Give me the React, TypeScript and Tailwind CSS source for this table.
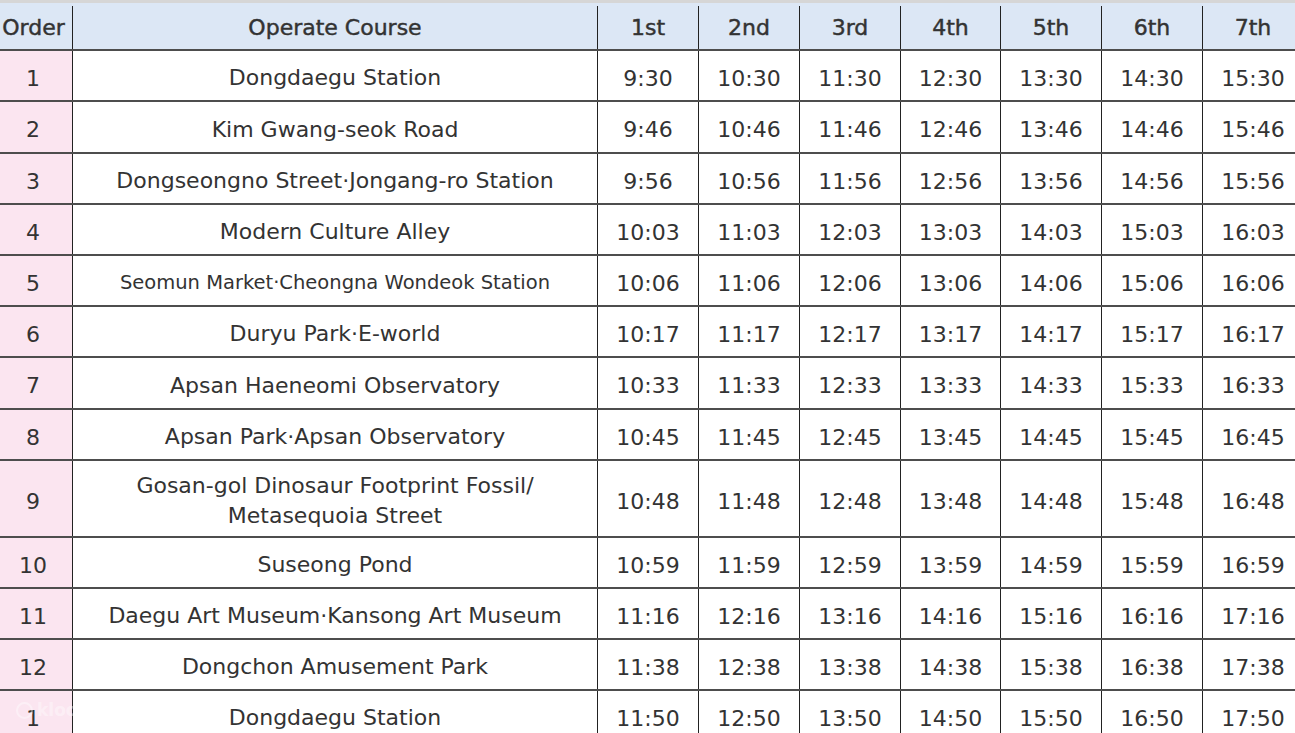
import React from "react";

const rows: { order: string; name: React.ReactNode; times: string[]; h: string; small?: boolean }[] = [
  { order: "1", name: "Dongdaegu Station", times: ["9:30", "10:30", "11:30", "12:30", "13:30", "14:30", "15:30"], h: "h-[51px]" },
  { order: "2", name: "Kim Gwang-seok Road", times: ["9:46", "10:46", "11:46", "12:46", "13:46", "14:46", "15:46"], h: "h-[52px]" },
  { order: "3", name: "Dongseongno Street·Jongang-ro Station", times: ["9:56", "10:56", "11:56", "12:56", "13:56", "14:56", "15:56"], h: "h-[51px]" },
  { order: "4", name: "Modern Culture Alley", times: ["10:03", "11:03", "12:03", "13:03", "14:03", "15:03", "16:03"], h: "h-[51px]" },
  { order: "5", name: "Seomun Market·Cheongna Wondeok Station", times: ["10:06", "11:06", "12:06", "13:06", "14:06", "15:06", "16:06"], h: "h-[51px]", small: true },
  { order: "6", name: "Duryu Park·E-world", times: ["10:17", "11:17", "12:17", "13:17", "14:17", "15:17", "16:17"], h: "h-[51px]" },
  { order: "7", name: "Apsan Haeneomi Observatory", times: ["10:33", "11:33", "12:33", "13:33", "14:33", "15:33", "16:33"], h: "h-[52px]" },
  { order: "8", name: "Apsan Park·Apsan Observatory", times: ["10:45", "11:45", "12:45", "13:45", "14:45", "15:45", "16:45"], h: "h-[51px]" },
  {
    order: "9",
    name: (
      <>
        Gosan-gol Dinosaur Footprint Fossil/
        <br />
        Metasequoia Street
      </>
    ),
    times: ["10:48", "11:48", "12:48", "13:48", "14:48", "15:48", "16:48"],
    h: "h-[77px]",
  },
  { order: "10", name: "Suseong Pond", times: ["10:59", "11:59", "12:59", "13:59", "14:59", "15:59", "16:59"], h: "h-[51px]" },
  { order: "11", name: "Daegu Art Museum·Kansong Art Museum", times: ["11:16", "12:16", "13:16", "14:16", "15:16", "16:16", "17:16"], h: "h-[51px]" },
  { order: "12", name: "Dongchon Amusement Park", times: ["11:38", "12:38", "13:38", "14:38", "15:38", "16:38", "17:38"], h: "h-[51px]" },
  { order: "1", name: "Dongdaegu Station", times: ["11:50", "12:50", "13:50", "14:50", "15:50", "16:50", "17:50"], h: "h-[51px]" },
];

const timeWidths = ["w-[101px]", "w-[101px]", "w-[101px]", "w-[100px]", "w-[101px]", "w-[101px]", "w-[101px]"];
const headers = ["1st", "2nd", "3rd", "4th", "5th", "6th", "7th"];

export default function App() {
  return (
    <div
      className="relative w-[1295px] h-[733px] overflow-hidden bg-white text-[#333]"
      style={{ fontFamily: '"DejaVu Sans", Verdana, sans-serif' }}
    >
      <div className="h-[3px] bg-[#d6d6d6]" />
      <div className="w-[1310px] flex flex-col">
        {/* header */}
        <div className="flex h-[48px] shrink-0 border-b-2 border-[#4d4d4d] bg-[#dce7f5] text-[22px] pt-[3px] [-webkit-text-stroke:0.45px_#333]">
          <div className="w-[73px] shrink-0 border-r border-[#222] flex items-center justify-center pr-[5px]">Order</div>
          <div className="w-[525px] shrink-0 border-r border-[#222] flex items-center justify-center">Operate Course</div>
          {headers.map((h, i) => (
            <div key={h} className={`${timeWidths[i]} shrink-0 border-r border-[#222] flex items-center justify-center`}>
              {h}
            </div>
          ))}
        </div>
        {rows.map((r, idx) => (
          <div key={idx} className={`flex ${r.h} shrink-0 border-b-2 border-[#4d4d4d] text-[22px]`}>
            <div className="w-[73px] shrink-0 border-r border-[#222] bg-[#fbe5f0] flex items-center justify-center pt-[5px] pr-[6px]">
              {r.order}
            </div>
            <div
              className={`w-[525px] shrink-0 border-r border-[#222] flex items-center justify-center text-center leading-[30px] pt-[5px] ${
                r.small ? "text-[19.5px]" : ""
              }`}
            >
              <span>{r.name}</span>
            </div>
            {r.times.map((t, i) => (
              <div key={i} className={`${timeWidths[i]} shrink-0 border-r border-[#222] flex items-center justify-center pt-[5px]`}>
                {t}
              </div>
            ))}
          </div>
        ))}
      </div>
      <div className="absolute left-[16px] top-[698px] flex items-center gap-1 text-[17px] text-white/40 font-bold">
        <span className="inline-block w-[17px] h-[17px] rounded-full border-2 border-white/40" />
        <span>klook</span>
      </div>
    </div>
  );
}
